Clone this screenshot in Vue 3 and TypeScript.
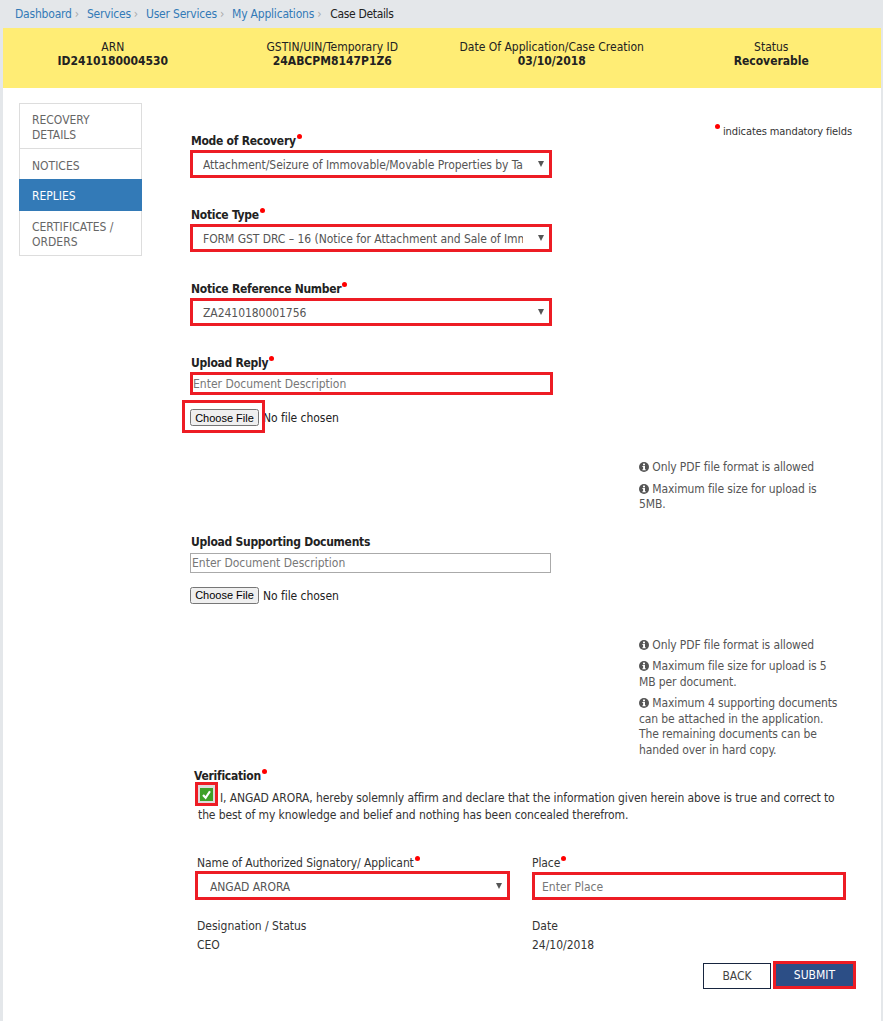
<script setup lang="ts">
const crumbs: string[] = ['Dashboard', 'Services', 'User Services', 'My Applications']
const heads = [
  { label: 'ARN', value: 'ID2410180004530' },
  { label: 'GSTIN/UIN/Temporary ID', value: '24ABCPM8147P1Z6' },
  { label: 'Date Of Application/Case Creation', value: '03/10/2018' },
  { label: 'Status', value: 'Recoverable' },
]
const navItems = [
  { text: 'RECOVERY DETAILS', active: false },
  { text: 'NOTICES', active: false },
  { text: 'REPLIES', active: true },
  { text: 'CERTIFICATES / ORDERS', active: false },
]
const selects = [
  { label: 'Mode of Recovery', value: 'Attachment/Seizure of Immovable/Movable Properties by Tax Officer' },
  { label: 'Notice Type', value: 'FORM GST DRC – 16 (Notice for Attachment and Sale of Immovable Property)' },
  { label: 'Notice Reference Number', value: 'ZA2410180001756' },
]
const info1 = ['Only PDF file format is allowed', 'Maximum file size for upload is 5MB.']
const info2 = [
  'Only PDF file format is allowed',
  'Maximum file size for upload is 5 MB per document.',
  'Maximum 4 supporting documents can be attached in the application. The remaining documents can be handed over in hard copy.',
]
</script>

<template>
  <div class="page">
    <nav class="crumbs">
      <template v-for="c in crumbs" :key="c">
        <a class="crumb">{{ c }}</a><span class="sep">›</span>
      </template>
      <span class="current">Case Details</span>
    </nav>
    <div class="sheet">
      <header class="head">
        <div v-for="h in heads" :key="h.label" class="head-col">
          <div>{{ h.label }}</div>
          <strong>{{ h.value }}</strong>
        </div>
      </header>
      <main class="main">
        <aside class="side">
          <a v-for="n in navItems" :key="n.text" class="side-item" :class="{ active: n.active }">{{ n.text }}</a>
        </aside>
        <form class="form" @submit.prevent>
          <p class="note"><i class="dot"></i> indicates mandatory fields</p>
          <div class="fields">
            <div v-for="s in selects" :key="s.label" class="field">
              <label class="lbl">{{ s.label }}<i class="dot"></i></label>
              <div class="sel marked">
                <select><option>{{ s.value }}</option></select>
                <span class="arrow"></span>
              </div>
            </div>
            <div class="upload">
              <label class="lbl">Upload Reply<i class="dot"></i></label>
              <input class="txt marked tall" placeholder="Enter Document Description" />
              <div class="file-row">
                <input type="file" class="file" />
                <span class="file-mark"></span>
              </div>
            </div>
          </div>
          <div class="info first">
            <p v-for="t in info1" :key="t">
              <svg class="ic" viewBox="0 0 10 10"><circle cx="5" cy="5" r="5" fill="#555" /><rect x="4" y="1.6" width="2" height="1.7" fill="#fff" /><path d="M3.4 4.1H6v3.2h.7v1H3.4v-1h.7V5.100H3.400z" fill="#fff" /></svg>
              {{ t }}
            </p>
          </div>
          <div class="upload second">
            <label class="lbl">Upload Supporting Documents</label>
            <input class="txt" placeholder="Enter Document Description" />
            <div class="file-row plain"><input type="file" class="file" /></div>
          </div>
          <div class="info">
            <p v-for="t in info2" :key="t">
              <svg class="ic" viewBox="0 0 10 10"><circle cx="5" cy="5" r="5" fill="#555" /><rect x="4" y="1.6" width="2" height="1.7" fill="#fff" /><path d="M3.4 4.1H6v3.2h.7v1H3.400v-1h.7V5.100H3.400z" fill="#fff" /></svg>
              {{ t }}
            </p>
          </div>
          <section class="verify">
            <label class="lbl">Verification<i class="dot"></i></label>
            <p class="decl">
              <span class="check"><svg viewBox="0 0 12 12"><rect width="12" height="12" fill="#3fa028" /><path d="M2.800 6.400l2.400 2.600 4-6" fill="none" stroke="#fff" stroke-width="2" /></svg></span>
              I, ANGAD ARORA, hereby solemnly affirm and declare that the information given herein above is true and correct to the best of my knowledge and belief and nothing has been concealed therefrom.
            </p>
            <div class="sign">
              <div>
                <label class="plain-lbl">Name of Authorized Signatory/ Applicant<i class="dot"></i></label>
                <div class="sel marked signer">
                  <select><option>ANGAD ARORA</option></select>
                  <span class="arrow"></span>
                </div>
                <div class="meta">
                  <div>Designation / Status</div>
                  <div>CEO</div>
                </div>
              </div>
              <div>
                <label class="plain-lbl">Place<i class="dot"></i></label>
                <input class="txt marked place" placeholder="Enter Place" />
                <div class="meta">
                  <div>Date</div>
                  <div>24/10/2018</div>
                </div>
              </div>
            </div>
            <div class="actions">
              <button type="button" class="back">BACK</button>
              <button type="submit" class="submit">SUBMIT</button>
            </div>
          </section>
        </form>
      </main>
    </div>
  </div>
</template>

<style>
html, body { margin: 0; background: #e4e7ea; }
</style>

<style scoped>
.page {
  width: 883px;
  height: 1021px;
  overflow: hidden;
  box-sizing: border-box;
  padding: 0 2px 0 3px;
  background: #e4e7ea;
  font-family: "DejaVu Sans", Verdana, sans-serif;
  font-stretch: condensed;
  font-size: 12px;
  line-height: 16px;
  color: #333;
}
.crumbs {
  height: 28px;
  padding-left: 12px;
  line-height: 29px;
  white-space: nowrap;
  letter-spacing: -0.2px;
}
.crumb { color: #337ab7; }
.sep { color: #aaa; margin: 0 8px 0 3px; }
.current { color: #222; margin-left: 1px; letter-spacing: -0.33px; }
.sheet { background: #fff; height: 993px; }
.head {
  height: 60px;
  box-sizing: border-box;
  padding-top: 12px;
  background: #ffed75;
  display: grid;
  grid-template-columns: repeat(4, 1fr);
  text-align: center;
  line-height: 14px;
  color: #222;
}
.main { display: flex; padding: 15px 0 0 16px; }
.side {
  width: 123px;
  height: 153px;
  box-sizing: border-box;
  border: 1px solid #ddd;
  display: flex;
  flex-direction: column;
  flex: none;
  margin-right: 48px;
}
.side-item {
  padding: 9px 12px 5px;
  line-height: 15px;
  color: #666;
  border-bottom: 1px solid #ddd;
}
.side-item:nth-child(2) { padding: 10px 12px 5px; border-bottom: 0; }
.side-item:last-child { border-bottom: 0; }
.side-item.active {
  margin: 0 -1px;
  color: #fff;
  background: #337ab7;
  border-bottom: 0;
  padding: 10px 13px 7px;
}
.form { width: 662px; flex: none; margin-left: 0; }
.note {
  float: right;
  margin: 21px 0 0 0;
  font-size: 11px;
  letter-spacing: -0.1px;
  color: #333;
}
.dot {
  display: inline-block;
  width: 5px;
  height: 5px;
  border-radius: 50%;
  background: #f00;
  vertical-align: 6px;
  margin-left: 1px;
}
.fields { padding-top: 30px; width: 363px; }
.field { margin-bottom: 29px; }
.lbl {
  display: block;
  height: 16px;
  margin-bottom: 1px;
  padding-left: 1px;
  font-weight: 700;
  letter-spacing: -0.27px;
  color: #222;
}
.sel { position: relative; box-sizing: border-box; width: 362px; height: 28px; }
.sel select {
  appearance: none;
  display: block;
  width: 100%;
  height: 100%;
  border: 0;
  outline: 0;
  background: transparent;
  padding: 2px 26px 0 10px;
  margin: 0;
  font: inherit;
  font-stretch: condensed;
  letter-spacing: -0.05px;
  color: #555;
}
.marked { border: 3px solid #ed1c24; }
.arrow {
  position: absolute;
  right: 3px;
  top: 8px;
  width: 0;
  height: 0;
  border-left: 3.500px solid transparent;
  border-right: 3.500px solid transparent;
  border-top: 6px solid #555;
  margin-right: 2px;
}
.upload { margin: 0; }
.upload .lbl { margin-bottom: 1px; }
.txt {
  display: block;
  box-sizing: border-box;
  width: 361px;
  height: 20px;
  border: 1px solid #aaa;
  padding: 0 1px;
  margin: 0;
  font: inherit;
  font-stretch: condensed;
  color: #555;
  outline: 0;
}
.txt::placeholder { color: #777; opacity: 1; }
.txt.tall { height: 23px; width: 363px; }
.txt.marked { border: 3px solid #ed1c24; padding: 0; }
.file-row { position: relative; height: 18px; margin-top: 14px; }
.file {
  display: block;
  width: 250px;
  height: 18px;
  font: inherit;
  font-stretch: condensed;
  letter-spacing: -0.05px;
  color: #222;
}
.file::file-selector-button {
  width: 69px;
  height: 17px;
  padding: 0;
  margin-right: 4px;
  font-family: "Liberation Sans", Arial, sans-serif;
  font-stretch: normal;
  font-size: 11px;
  letter-spacing: 0;
}
.file-mark {
  position: absolute;
  left: -8px;
  top: -9px;
  width: 83px;
  height: 33px;
  box-sizing: border-box;
  border: 3px solid #ed1c24;
  pointer-events: none;
}
.info {
  margin-left: 449px;
  width: 202px;
  margin-top: 33px;
  color: #555;
  font-size: 12px;
  line-height: 15.500px;
  letter-spacing: -0.12px;
}
.info p { margin: 0 0 6px; }
.info.first { margin-top: 33px; }
.ic { width: 10px; height: 10px; vertical-align: -1px; margin-right: 0; }
.upload.second { margin-top: 21px; }
.upload.second .lbl { margin-bottom: 3px; }
.verify { padding: 0; margin-top: 10px; }
.verify .lbl { margin: 0 0 0 4px; padding-left: 0; }
.decl {
  position: relative;
  margin: 0 0 0 8px;
  width: 645px;
  line-height: 17px;
  padding-top: 6px;
  color: #333;
  text-indent: 22px;
  letter-spacing: -0.1px;
}
.check {
  position: absolute;
  left: -3px;
  top: -2px;
  width: 23px;
  height: 24px;
  box-sizing: border-box;
  border: 3px solid #ed1c24;
  background: #ddd;
  display: flex;
  align-items: center;
  justify-content: center;
  text-indent: 0;
}
.check svg { width: 13px; height: 13px; }
.sign {
  display: grid;
  grid-template-columns: 315px 314px;
  column-gap: 22px;
  margin: 31px 0 0 5px;
}
.plain-lbl { display: block; height: 16px; margin: 0 0 0 2px; color: #333; letter-spacing: -0.1px; }
.sign .signer { height: 29px; width: 315px; }
.signer select { padding-left: 12px; }
.signer .arrow { top: 9px; }
.place { width: 314px !important; height: 28px !important; padding-left: 7px !important; padding-top: 1px !important; margin-top: 1px; }
.meta { margin: 17px 0 0 2px; line-height: 19px; }
.sign > div:last-child .meta { margin-left: 0; }
.sign > div:last-child .plain-lbl { margin-left: 0; }
.actions {
  display: flex;
  justify-content: flex-end;
  align-items: flex-end;
  gap: 2px;
  margin: 6px 0 0;
  padding-right: 3px;
  width: 666px;
}
.actions button { font: inherit; font-stretch: condensed; margin: 0; padding: 0; }
.back {
  width: 68px;
  height: 26px;
  background: #fff;
  border: 1px solid #17253f;
  color: #444;
}
.submit {
  width: 83px;
  height: 28px;
  background: #2c4e86;
  color: #fff;
  border: 3px solid #ed1c24;
}
</style>
